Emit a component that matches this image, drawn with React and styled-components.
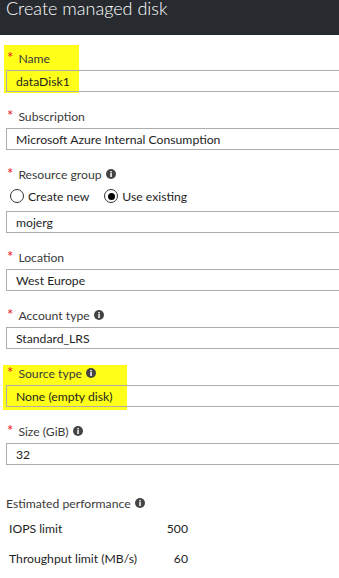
import React from 'react';
import styled, { createGlobalStyle } from 'styled-components';

const GlobalStyle = createGlobalStyle`
  html, body {
    margin: 0;
    padding: 0;
    background: #fff;
  }
  body {
    font-family: Lato, "Liberation Sans", sans-serif;
    overflow: hidden;
  }
`;

const Blade = styled.div`
  width: 339px;
  height: 578px;
  overflow: hidden;
`;

const Header = styled.div`
  height: 35px;
  background: #272b30;
  padding: 0 6px;
  overflow: hidden;
`;

const Title = styled.div`
  color: #fff;
  font-size: 18px;
  font-weight: 300;
  line-height: 18px;
  margin-top: -1px;
  white-space: nowrap;
`;

const Body = styled.div`
  padding: 13px 0 0 6px;
`;

const Field = styled.div`
  position: relative;
  isolation: isolate;
  margin-bottom: 14px;
`;

const Highlight = styled.div`
  position: absolute;
  z-index: -1;
  background: #ffff1a;
`;

const Label = styled.div`
  display: flex;
  align-items: center;
  height: 20px;
  margin-bottom: 2px;
  padding-left: 1px;
  font-size: 12.2px;
  color: #3a3a3a;
`;

const Star = styled.span`
  color: #e81123;
  margin-right: 5px;
  font-size: 15px;
  line-height: 1;
  position: relative;
  top: -1px;
`;

const Input = styled.div`
  box-sizing: border-box;
  width: 400px;
  height: 22px;
  border: 1px solid #adadad;
  padding: 0 9px;
  display: flex;
  align-items: center;
  font-size: 12.2px;
  color: #1e1e1e;
`;

const RadioRow = styled.div`
  display: flex;
  align-items: center;
  height: 24px;
  margin: -2px 0 3px 4px;
  gap: 15px;
`;

const RadioOption = styled.label`
  display: flex;
  align-items: center;
  gap: 4px;
  font-size: 12.2px;
  color: #1e1e1e;
`;

const RadioCircle = styled.span`
  box-sizing: border-box;
  width: 14px;
  height: 14px;
  border-radius: 50%;
  border: 1px solid #333;
  display: flex;
  align-items: center;
  justify-content: center;

  &::after {
    content: '';
    width: 7px;
    height: 7px;
    border-radius: 50%;
    background: ${(p) => (p.$checked ? '#000' : 'transparent')};
  }
`;

const Perf = styled.div`
  margin-top: 28px;
`;

const PerfTitle = styled.div`
  display: flex;
  align-items: center;
  height: 20px;
  font-size: 12.2px;
  color: #3a3a3a;
`;

const PerfTable = styled.div`
  display: grid;
  grid-template-columns: 140px 39px;
  row-gap: 10px;
  margin: 6px 0 0 3px;
`;

const PerfLabel = styled.div`
  height: 20px;
  line-height: 20px;
  font-size: 12.2px;
  color: #1e1e1e;
`;

const PerfValue = styled(PerfLabel)`
  text-align: right;
`;

const InfoWrap = styled.span`
  display: inline-flex;
  margin-left: 4px;
`;

function Info() {
  return (
    <InfoWrap>
      <svg width="10" height="10" viewBox="0 0 10 10">
        <circle cx="5" cy="5" r="5" fill="#444" />
        <rect x="4.3" y="4" width="1.5" height="4" fill="#fff" />
        <rect x="4.3" y="2" width="1.5" height="1.4" fill="#fff" />
      </svg>
    </InfoWrap>
  );
}

function FormField({ label, info, value, highlight, children }) {
  return (
    <Field>
      {highlight && <Highlight style={highlight} />}
      <Label>
        <Star>*</Star>
        {label}
        {info && <Info />}
      </Label>
      {children}
      <Input>{value}</Input>
    </Field>
  );
}

export default function App() {
  return (
    <Blade>
      <GlobalStyle />
      <Header>
        <Title>Create managed disk</Title>
      </Header>
      <Body>
        <FormField
          label="Name"
          value="dataDisk1"
          highlight={{ left: -2, top: -3, width: 75, height: 48 }}
        />
        <FormField label="Subscription" value="Microsoft Azure Internal Consumption" />
        <FormField label="Resource group" info value="mojerg">
          <RadioRow>
            <RadioOption>
              <RadioCircle />
              Create new
            </RadioOption>
            <RadioOption>
              <RadioCircle $checked />
              Use existing
            </RadioOption>
          </RadioRow>
        </FormField>
        <FormField label="Location" value="West Europe" />
        <FormField label="Account type" info value="Standard_LRS" />
        <FormField
          label="Source type"
          info
          value="None (empty disk)"
          highlight={{ left: -3, top: 2, width: 124, height: 45 }}
        />
        <FormField label="Size (GiB)" info value="32" />
        <Perf>
          <PerfTitle>
            Estimated performance
            <Info />
          </PerfTitle>
          <PerfTable>
            <PerfLabel>IOPS limit</PerfLabel>
            <PerfValue>500</PerfValue>
            <PerfLabel>Throughput limit (MB/s)</PerfLabel>
            <PerfValue>60</PerfValue>
          </PerfTable>
        </Perf>
      </Body>
    </Blade>
  );
}
